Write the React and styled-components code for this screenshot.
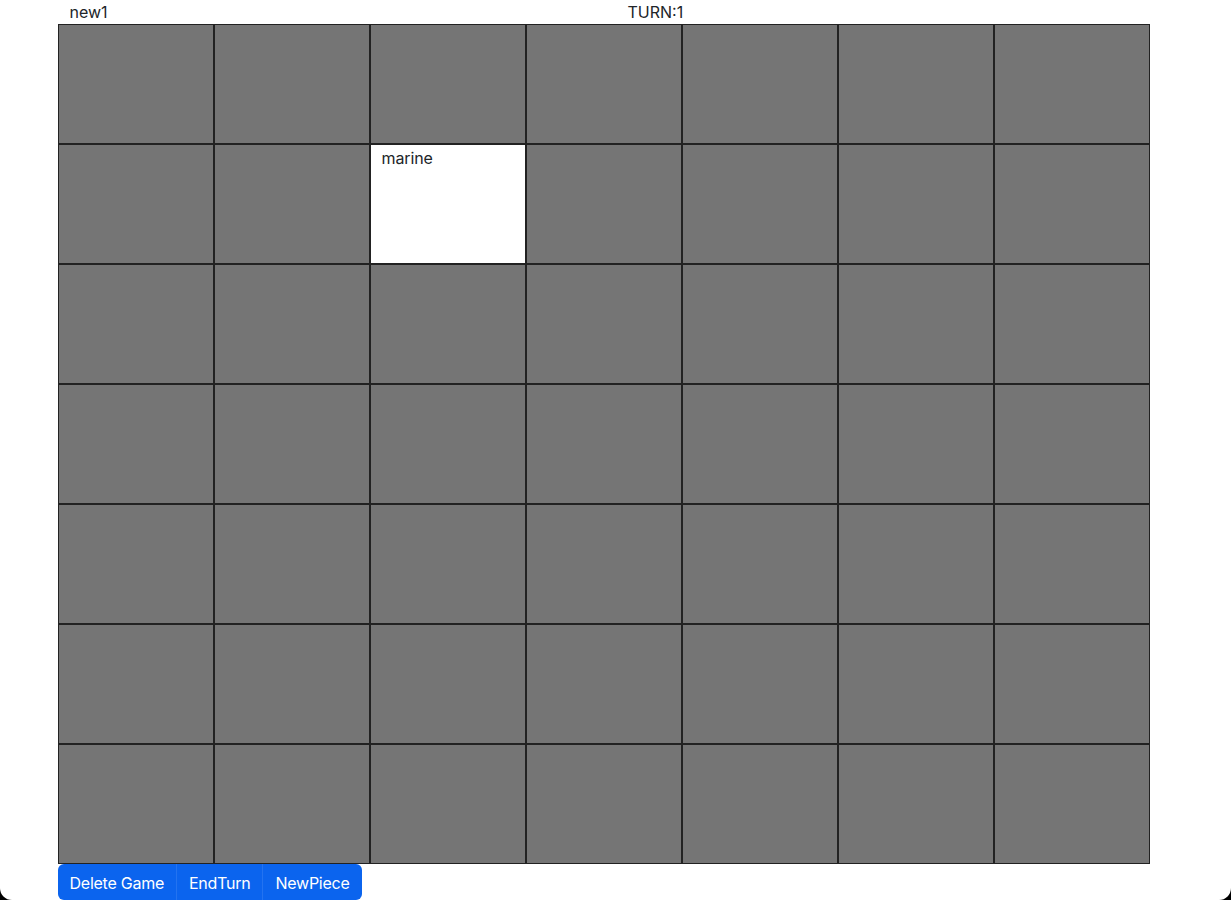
import * as React from "react";
import styled, { createGlobalStyle } from "styled-components";

const GlobalStyle = createGlobalStyle`
  html, body {
    margin: 0;
    padding: 0;
    background: #000;
  }
  body {
    font-family: Inter, "Noto Sans", "Liberation Sans", sans-serif;
    font-size: 16px;
    line-height: 1.5;
    color: #212529;
  }
`;

const Page = styled.div`
  height: 900px;
  overflow: hidden;
  background: #fff;
  border-radius: 0 0 12px 12px;
`;

const Container = styled.div`
  width: 1116px;
  margin: 0 auto;
`;

const Header = styled.div`
  display: grid;
  grid-template-columns: 570px 1fr;
  margin: 0 -12px;
  height: 24px;
  line-height: 24px;
`;

const Col = styled.div`
  padding-left: ${(p) => p.$pad || 12}px;
`;

const Board = styled.div`
  display: grid;
  grid-template-columns: repeat(7, 156px);
  grid-auto-rows: 120px;
`;

const Cell = styled.div`
  box-sizing: border-box;
  border: 1px solid #222;
  background: ${(p) => (p.$occupied ? "#fff" : "#757575")};
  padding: 1px 11px;
  font-size: 16px;
  line-height: 24px;
  letter-spacing: -0.1px;
`;

const ButtonGroup = styled.div`
  display: inline-flex;
`;

const Button = styled.button`
  font-family: inherit;
  font-size: 16px;
  line-height: 24px;
  letter-spacing: -0.25px;
  color: #fff;
  background: #0b64ee;
  border: 0;
  border-left: 1px solid #2373f0;
  padding: 7px 12px 5px;
  border-radius: 0;
  cursor: pointer;
  &:first-child {
    border-left: 0;
    border-top-left-radius: 6px;
    border-bottom-left-radius: 6px;
  }
  &:last-child {
    border-top-right-radius: 6px;
    border-bottom-right-radius: 6px;
  }
`;

const pieces = { "1-2": "marine" };

export default function App() {
  const cells = [];
  for (let r = 0; r < 7; r++) {
    for (let c = 0; c < 7; c++) {
      const piece = pieces[`${r}-${c}`];
      cells.push(
        <Cell key={`${r}-${c}`} $occupied={!!piece}>
          {piece}
        </Cell>
      );
    }
  }
  return (
    <>
      <GlobalStyle />
      <Page>
        <Container>
          <Header>
            <Col $pad={24}>new1</Col>
            <Col>TURN:1</Col>
          </Header>
          <Board>{cells}</Board>
          <ButtonGroup>
            <Button>Delete Game</Button>
            <Button>EndTurn</Button>
            <Button>NewPiece</Button>
          </ButtonGroup>
        </Container>
      </Page>
    </>
  );
}
